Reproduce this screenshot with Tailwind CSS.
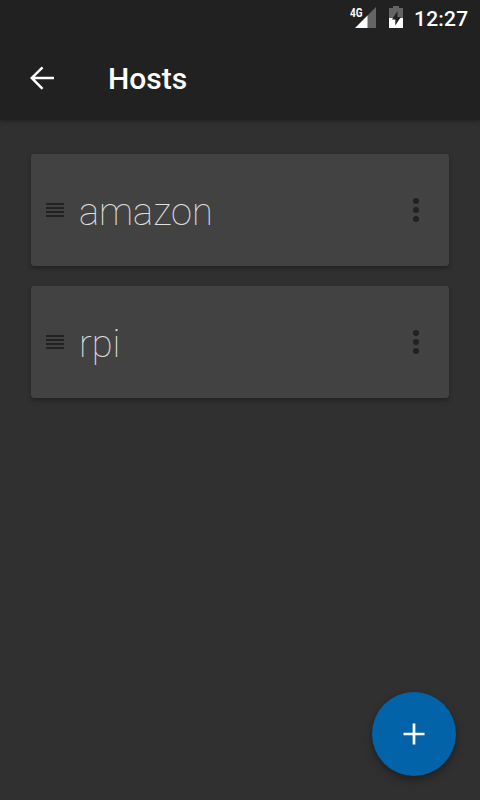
<!DOCTYPE html>
<html lang="en">
<head>
    <meta charset="UTF-8">
    <meta name="viewport" content="width=device-width, initial-scale=1.0">
    <title>Hosts</title>
    <script src="https://cdn.jsdelivr.net/npm/@tailwindcss/browser@4"></script>
</head>
<body class="bg-[#303030] font-['Roboto',sans-serif] text-white">
    <div class="relative flex flex-col h-[800px] w-[480px] overflow-hidden">
        <header class="h-[120px] bg-[#212121] shadow-[0_1px_4px_rgba(0,0,0,0.35)]">
            <!-- status bar -->
            <div class="flex h-9 items-center justify-end pr-3">
                <svg class="h-9 w-[30px]" viewBox="348 0 30 36">
                    <text x="350" y="16.500" font-size="12" font-weight="700" fill="#fff" textLength="12.500" lengthAdjust="spacingAndGlyphs">4G</text>
                    <path d="M376 7v21h-9V16z" fill="#646464" />
                    <path d="M367.500 15.500v12.500h-12.500z" fill="#fff" />
                </svg>
                <svg class="ml-[9px] h-9 w-[18px]" viewBox="387 0 18 36">
                    <path d="M393 6h6v2h4v10h-14V8h4z" fill="#646464" />
                    <path d="M389 18h14v10h-14z" fill="#fff" />
                    <path d="M397.500 11l-5.500 8.500h3.300v6l5.500-8.500h-3.300z" fill="#212121" />
                </svg>
                <span class="ml-[9px] mt-[1px] w-[54px] text-[21px] leading-9 font-medium tracking-[0.2px] whitespace-nowrap">12:27</span>
            </div>
            <!-- toolbar -->
            <div class="flex h-[84px] items-center pl-6">
                <svg class="size-9" viewBox="0 0 24 24" fill="#fff"><path d="M20 11.200H7.200l5.750-5.750L11.800 4.300 4 12l7.800 7.800 1.150-1.150L7.200 12.800H20z" /></svg>
                <h1 class="ml-12 mt-[2px] text-[30px] leading-9 font-medium">Hosts</h1>
            </div>
        </header>

        <main class="flex flex-col gap-5 px-[31px] pt-[34px]">
            <div class="flex h-28 items-center rounded-[3px] bg-[#424242] pl-[15px] pr-[15px] shadow-[0_2px_4px_rgba(0,0,0,0.35)]">
                <svg class="h-[14px] w-[18px]" viewBox="0 0 18 14" fill="#212121"><path d="M0 0h18v2H0zM0 4h18v2H0zM0 8h18v2H0zM0 12h18v2H0z" /></svg>
                <span class="ml-[15px] mt-1 flex-1 text-[38px] leading-[46px] font-thin text-[#e0e0e0]">amazon</span>
                <svg class="size-9" viewBox="0 0 24 24" fill="#212121"><circle cx="12" cy="6" r="2" /><circle cx="12" cy="12" r="2" /><circle cx="12" cy="18" r="2" /></svg>
            </div>
            <div class="flex h-28 items-center rounded-[3px] bg-[#424242] pl-[15px] pr-[15px] shadow-[0_2px_4px_rgba(0,0,0,0.35)]">
                <svg class="h-[14px] w-[18px]" viewBox="0 0 18 14" fill="#212121"><path d="M0 0h18v2H0zM0 4h18v2H0zM0 8h18v2H0zM0 12h18v2H0z" /></svg>
                <span class="ml-[15px] mt-1 flex-1 text-[38px] leading-[46px] font-thin text-[#e0e0e0]">rpi</span>
                <svg class="size-9" viewBox="0 0 24 24" fill="#212121"><circle cx="12" cy="6" r="2" /><circle cx="12" cy="12" r="2" /><circle cx="12" cy="18" r="2" /></svg>
            </div>
        </main>

        <button class="absolute right-6 bottom-6 flex size-[84px] items-center justify-center rounded-full bg-[#0363a8] shadow-[0_4px_9px_rgba(0,0,0,0.35)]" aria-label="Add host">
            <svg class="size-9" viewBox="0 0 24 24" fill="#fff"><path d="M19 12.900h-6.100V19h-1.800v-6.100H5v-1.800h6.100V5h1.800v6.100H19z" /></svg>
        </button>
    </div>
</body>
</html>
